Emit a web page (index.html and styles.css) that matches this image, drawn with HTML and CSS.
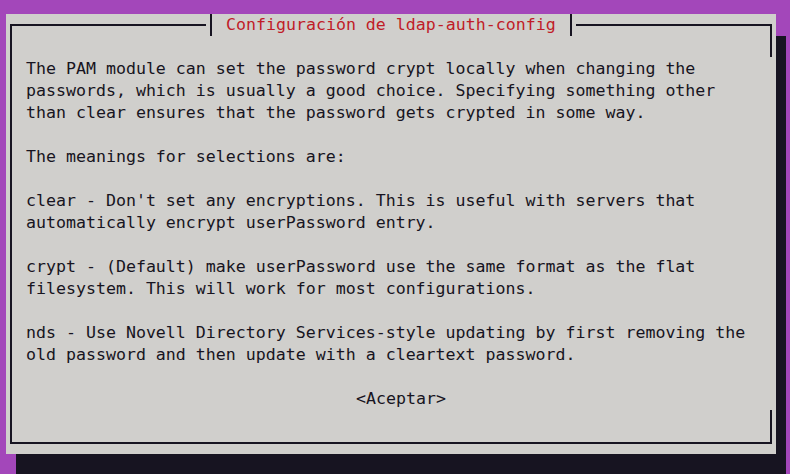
FILE: index.html
```html
<!DOCTYPE html>
<html lang="es">
<head>
<meta charset="utf-8">
<title>Configuración de ldap-auth-config</title>
<link rel="stylesheet" href="styles.css">
</head>
<body>
<div class="screen">
  <div class="dialog">
    <div class="frame">
      <div class="title"><span class="tick"></span><span class="title-text">Configuración de ldap-auth-config</span><span class="tick"></span></div>
      <div class="body">
        <p class="para">The PAM module can set the password crypt locally when changing the
passwords, which is usually a good choice. Specifying something other
than clear ensures that the password gets crypted in some way.</p>
        <p class="para">The meanings for selections are:</p>
        <p class="para">clear - Don't set any encryptions. This is useful with servers that
automatically encrypt userPassword entry.</p>
        <p class="para">crypt - (Default) make userPassword use the same format as the flat
filesystem. This will work for most configurations.</p>
        <p class="para">nds - Use Novell Directory Services-style updating by first removing the
old password and then update with a cleartext password.</p>
        <div class="buttons"><span class="button">&lt;Aceptar&gt;</span></div>
      </div>
    </div>
  </div>
</div>
</body>
</html>
```
FILE: styles.css
```css
html, body {
  margin: 0;
  padding: 0;
}
body {
  width: 790px;
  height: 474px;
  overflow: hidden;
  background: #a347ba;
  font-family: "DejaVu Sans Mono", monospace;
  font-size: 16.6px;
  line-height: 22px;
  color: #171421;
}
.screen {
  padding: 14px 0 0 6px;
}
.dialog {
  width: 770px;
  height: 440px;
  box-sizing: border-box;
  padding: 10px 4px;
  background: #d0cfcc;
  box-shadow: 10px 22px 0 #171421;
}
.frame {
  position: relative;
  height: 420px;
  box-sizing: border-box;
  border-left: 2px solid #171421;
  border-top: 2px solid #171421;
  border-bottom: 2px solid #171421;
}
.frame::before,
.frame::after {
  content: "";
  position: absolute;
  right: 0;
  width: 2px;
  background: #171421;
}
.frame::before {
  top: -2px;
  height: 33px;
}
.frame::after {
  bottom: -2px;
  height: 34px;
}
.title {
  position: absolute;
  left: 194px;
  top: -12px;
  height: 22px;
  display: flex;
  background: #d0cfcc;
}
.tick {
  width: 2px;
  height: 22px;
  background: #171421;
  margin: 0 4px;
}
.title-text {
  color: #c01c28;
  padding: 0 10px;
  white-space: pre;
}
.body {
  padding: 32px 0 0 14px;
}
.para {
  margin: 0 0 22px;
  white-space: pre;
}
.buttons {
  padding-left: 330px;
}
.button {
  white-space: pre;
}
```
